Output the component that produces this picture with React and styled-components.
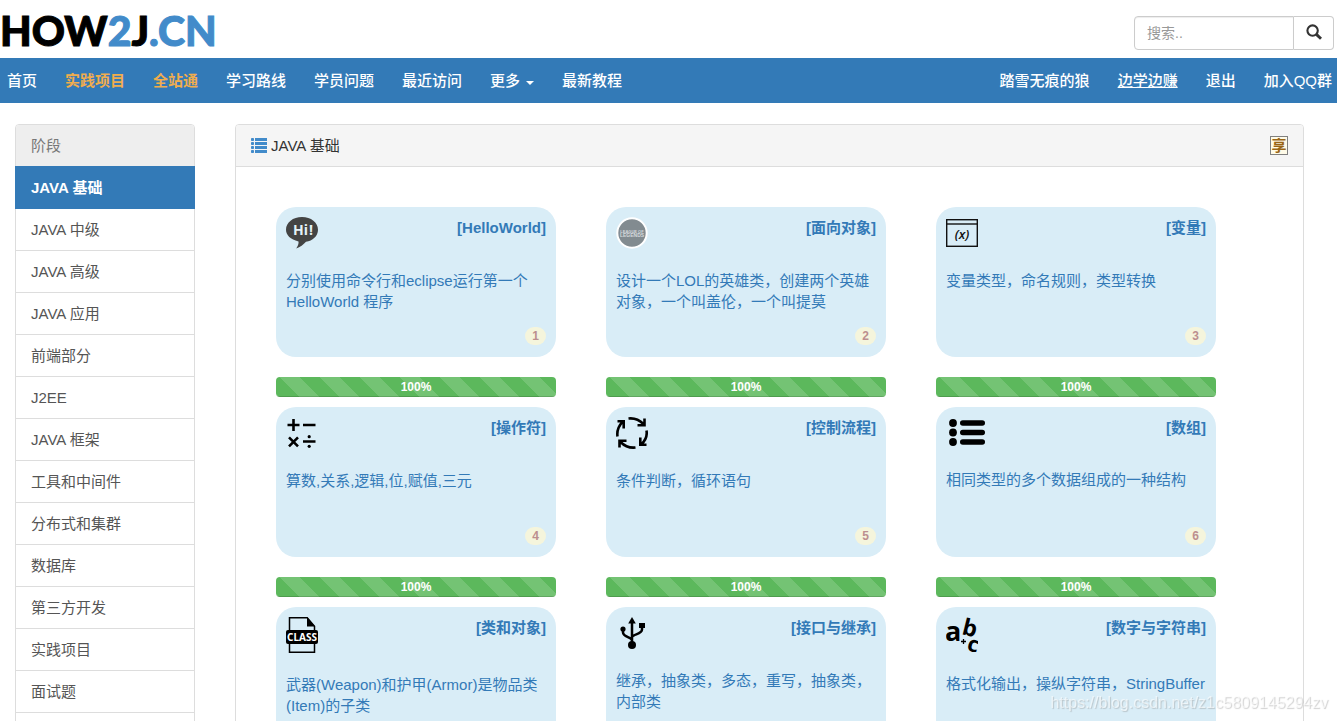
import styled, { createGlobalStyle } from "styled-components";

const GlobalStyle = createGlobalStyle`
  * {
    box-sizing: border-box;
  }

  body {
    margin: 0;
    background-color: #fff;
    color: #333;
    font-family: "Liberation Sans", "Noto Sans CJK SC", sans-serif;
    font-size: 15px;
    line-height: 21px;
  }

  a {
    color: inherit;
    text-decoration: none;
  }

  ul {
    list-style: none;
    margin: 0;
    padding: 0;
  }
`;

const Page = styled.div`
  overflow: hidden;
`;

const Header = styled.header`
  display: flex;
  align-items: center;
  justify-content: space-between;
  height: 58px;
  padding: 8px 3px 0 0;
`;

const LogoLink = styled.a`
  padding-bottom: 4px;
  color: #000;
  font-family: Lato, sans-serif;
  font-size: 41px;
  font-weight: 900;
  line-height: 46px;
  -webkit-text-stroke: 1px currentColor;
`;

const LogoAccent = styled.span`
  color: #428bca;
`;

const SearchForm = styled.form`
  display: flex;
  width: 200px;
  height: 34px;
`;

const SearchInput = styled.input`
  flex: 1;
  min-width: 0;
  padding: 6px 12px;
  border: 1px solid #ccc;
  border-radius: 4px 0 0 4px;
  box-shadow: inset 0 1px 1px rgba(0, 0, 0, 0.075);
  color: #555;
  font-family: inherit;
  font-size: 14px;

  &::placeholder {
    color: #999;
  }
`;

const SearchButton = styled.button`
  display: flex;
  align-items: center;
  justify-content: center;
  width: 40px;
  padding: 0 0 2px;
  border: 1px solid #ccc;
  border-left: 0;
  border-radius: 0 4px 4px 0;
  background-color: #fff;
  color: #333;
`;

const Nav = styled.nav`
  display: flex;
  align-items: center;
  justify-content: space-between;
  height: 45px;
  padding: 0 5px 0 7px;
  background-color: #337ab7;
`;

const NavGroup = styled.div`
  display: flex;
  gap: 28px;
`;

const NavLink = styled.a`
  display: flex;
  align-items: center;
  gap: 6px;
  color: ${({ $highlight }) => ($highlight ? "#f0ad4e" : "#fff")};
  font-weight: ${({ $highlight }) => ($highlight ? 700 : 500)};
  text-decoration: ${({ $underline }) => ($underline ? "underline" : "none")};
  white-space: nowrap;
`;

const Caret = styled.span`
  margin-top: 4px;
  border-top: 4px solid #fff;
  border-right: 4px solid transparent;
  border-left: 4px solid transparent;
`;

const Main = styled.main`
  display: flex;
  gap: 40px;
  padding: 21px 33px 21px 15px;
`;

const Stages = styled.ul`
  flex: 0 0 180px;
  border: 1px solid #ddd;
  border-radius: 4px;
`;

const StageTitle = styled.li`
  padding: 10px 15px;
  border-radius: 3px 3px 0 0;
  background-color: #eee;
  color: #777;
`;

const StageItem = styled.li`
  &:last-child {
    border-bottom: 1px solid #ddd;
  }
`;

const StageLink = styled.a`
  position: relative;
  z-index: ${({ $active }) => ($active ? 1 : 0)};
  display: block;
  margin: 0 -1px;
  padding: 10px 16px;
  border-top: 1px solid ${({ $active }) => ($active ? "#337ab7" : "#ddd")};
  background-color: ${({ $active }) => ($active ? "#337ab7" : "transparent")};
  box-shadow: ${({ $active }) => ($active ? "0 1px 0 #337ab7" : "none")};
  color: ${({ $active }) => ($active ? "#fff" : "#555")};
  font-weight: ${({ $active }) => ($active ? 700 : 400)};
`;

const Panel = styled.section`
  flex: 1;
  min-width: 0;
  border: 1px solid #ddd;
  border-radius: 4px;
`;

const PanelHeading = styled.div`
  display: flex;
  align-items: center;
  justify-content: space-between;
  height: 42px;
  padding: 0 15px;
  border-bottom: 1px solid #ddd;
  border-radius: 3px 3px 0 0;
  background-color: #f5f5f5;
`;

const PanelTitle = styled.h1`
  display: flex;
  align-items: center;
  gap: 4px;
  margin: 0;
  font-size: 15px;
  font-weight: 400;
`;

const ShareButton = styled.button`
  width: 18px;
  height: 19px;
  padding: 0;
  border: 1px solid #808080;
  background-color: #fffbe8;
  color: #996515;
  font-family: inherit;
  font-size: 15px;
  font-weight: 700;
  line-height: 15px;
`;

const Courses = styled.div`
  display: grid;
  grid-template-columns: repeat(auto-fill, 280px);
  gap: 10px 50px;
  padding: 40px;
`;

const Course = styled.article`
  display: flex;
  flex-direction: column;
  gap: 20px;
`;

const CourseCard = styled.a`
  display: flex;
  flex-direction: column;
  height: 150px;
  padding: 10px 10px 12px;
  border-radius: 20px;
  background-color: #d9edf7;
  color: #337ab7;
`;

const CourseTop = styled.div`
  display: flex;
  align-items: flex-start;
  justify-content: space-between;
  margin-bottom: 21px;

  svg {
    display: block;
  }
`;

const CourseNumber = styled.span`
  align-self: flex-end;
  margin-top: auto;
  padding: 3px 7px;
  border-radius: 10px;
  background-color: #f5f5dc;
  color: #bc8f8f;
  font-size: 12px;
  font-weight: 700;
  line-height: 12px;
`;

const Progress = styled.div`
  height: 20px;
  overflow: hidden;
  border-radius: 4px;
  background-color: #f5f5f5;
`;

const ProgressBar = styled.div`
  height: 100%;
  background-color: #5cb85c;
  background-image: linear-gradient(
    45deg,
    rgba(255, 255, 255, 0.15) 25%,
    transparent 25%,
    transparent 50%,
    rgba(255, 255, 255, 0.15) 50%,
    rgba(255, 255, 255, 0.15) 75%,
    transparent 75%,
    transparent
  );
  background-position: 4px 0;
  background-size: 40px 40px;
  box-shadow: inset 0 -1px 0 rgba(0, 0, 0, 0.15);
  color: #fff;
  font-size: 12px;
  font-weight: 700;
  line-height: 20px;
  text-align: center;
`;

const Watermark = styled.div`
  position: fixed;
  right: 9px;
  bottom: 8px;
  color: rgba(255, 255, 255, 0.6);
  font-size: 16px;
  text-shadow: 1px 1px 1px rgba(140, 140, 140, 0.4);
  pointer-events: none;
`;

function SearchIcon() {
  return (
    <svg width="16" height="16" viewBox="0 0 16 16" fill="none" stroke="currentColor">
      <circle cx="6.600" cy="6.600" r="5.200" strokeWidth="2.100" />
      <path d="M10.400 10.400l4.600 4.400" strokeWidth="2.900" />
    </svg>
  );
}

function ListIcon() {
  return (
    <svg width="16" height="15" viewBox="0 0 16 15" fill="#428bca">
      {[0, 4, 8, 12].map((y) => (
        <g key={y}>
          <rect width="3" height="3" rx="0.800" y={y} />
          <rect x="4" y={y} width="12" height="3" />
        </g>
      ))}
    </svg>
  );
}

function HelloIcon() {
  return (
    <svg width="32" height="32" viewBox="0 0 32 32">
      <path
        d="M16 0C7 0 0 5.500 0 12.700c0 5.300 4.500 9.800 12.500 11.700.5 2-.8 4.600-2.300 7.200 4-1.600 7.200-4 9.800-6.900C26.500 24 32 19 32 12.700 32 5.500 25 0 16 0z"
        fill="#444"
      />
      <g fill="#e4f1f7" fontFamily="Open Sans" fontSize="14" fontWeight="700">
        <text x="7" y="18">
          Hi
        </text>
        <text x="23" y="18">
          !
        </text>
      </g>
    </svg>
  );
}

function LegendsIcon() {
  return (
    <svg width="32" height="32" viewBox="0 0 32 32">
      <circle cx="16" cy="16" r="14.700" fill="#828b90" stroke="#fff" strokeWidth="2" />
      <g fill="#d5dadd" fontFamily="Liberation Sans" fontWeight="700" textAnchor="middle">
        <text x="16" y="15.500" fontSize="4">
          LEAGUE OF
        </text>
        <text x="16" y="20" fontSize="5">
          LEGENDS
        </text>
      </g>
    </svg>
  );
}

function VariableIcon() {
  return (
    <svg width="32" height="32" viewBox="0 0 32 32">
      <g fill="none" stroke="#111">
        <rect x="0.700" y="2.700" width="30.600" height="26.600" strokeWidth="1.400" />
        <path d="M0 7h32" strokeWidth="1.400" />
      </g>
      <text
        x="16"
        y="21.500"
        fill="#111"
        fontFamily="Open Sans"
        fontSize="13"
        fontStyle="italic"
        fontWeight="600"
        textAnchor="middle"
      >
        (x)
      </text>
    </svg>
  );
}

function OperatorIcon() {
  return (
    <svg width="32" height="32" viewBox="0 0 32 32" fill="none" stroke="#000" strokeWidth="2.600">
      <path d="M1.500 8h12M7.500 2v12M17 8h12.500M3 20.300l9 9M12 20.300l-9 9M17 24.500h12.500" />
      <circle cx="23.200" cy="19.700" r="1.600" fill="#000" stroke="none" />
      <circle cx="23.200" cy="29.300" r="1.600" fill="#000" stroke="none" />
    </svg>
  );
}

function LoopIcon() {
  return (
    <svg width="32" height="32" viewBox="0 0 32 32" fill="none" stroke="#000" strokeWidth="2.600">
      <path d="M1.500 19.500C.8 14.500 2.500 9 6.500 4.800M1.500 4.300h6.200v7.200" />
      <path d="M12.500 1.500C18.500.8 23.500 3 27.500 7M28.500 1.500v6.700h-7" />
      <path d="M30.500 13.500c.8 5-1 10-5 13.500M30.500 27.700h-6.200v-7.200" />
      <path d="M19.500 30.500C13.500 31.200 8.500 29 4.500 25M3.500 30.500v-6.700h7" />
    </svg>
  );
}

function ArrayIcon() {
  return (
    <svg width="40" height="31" viewBox="0 0 40 31">
      {[6, 15.5, 25].map((y) => (
        <g key={y}>
          <circle cx="7" cy={y} r="3.900" />
          <rect x="14" y={y - 2.8} width="25" height="5.600" rx="2.800" />
        </g>
      ))}
    </svg>
  );
}

function ClassIcon() {
  return (
    <svg width="32" height="36" viewBox="0 0 32 36">
      <path d="M3.500 35.200V.8h17.700l7.300 8.400v26z" fill="none" stroke="#000" strokeWidth="1.500" />
      <path d="M21 0v9.500h8z" />
      <rect y="13" width="32" height="14" rx="2" />
      <text
        x="16"
        y="23.500"
        fill="#fff"
        fontFamily="Noto Sans"
        fontSize="10"
        fontWeight="700"
        textAnchor="middle"
      >
        CLASS
      </text>
    </svg>
  );
}

function UsbIcon() {
  return (
    <svg width="32" height="32" viewBox="0 0 32 32">
      <path
        d="M16 5v23M16 23.500c0-3.500-9-3.500-9-8v-4M16 20.500c0-3.500 10-3 10-8V9"
        fill="none"
        stroke="#000"
        strokeWidth="2.500"
      />
      <path d="M16 0l-3.800 6.500h7.600z" />
      <circle cx="7" cy="12" r="2.600" />
      <rect x="23" y="6" width="6" height="5" />
      <circle cx="16" cy="28" r="4" />
    </svg>
  );
}

function StringIcon() {
  return (
    <svg width="32" height="35" viewBox="0 0 32 35" fontFamily="Open Sans" fontWeight="700">
      <text x="-1" y="24" fontSize="27">
        a
      </text>
      <text x="15" y="17" fontSize="23" transform="rotate(14 15 17)">
        b
      </text>
      <text x="20" y="33" fontSize="22" transform="rotate(16 20 33)">
        c
      </text>
      <path d="M15 24.500h5M17.500 22v5" stroke="#000" strokeWidth="1.300" />
    </svg>
  );
}

const leftLinks = [
  { text: "首页" },
  { text: "实践项目", highlight: true },
  { text: "全站通", highlight: true },
  { text: "学习路线" },
  { text: "学员问题" },
  { text: "最近访问" },
  { text: "更多", caret: true },
  { text: "最新教程" },
];

const rightLinks = [
  { text: "踏雪无痕的狼" },
  { text: "边学边赚", underline: true },
  { text: "退出" },
  { text: "加入QQ群" },
];

const stages = [
  "JAVA 基础",
  "JAVA 中级",
  "JAVA 高级",
  "JAVA 应用",
  "前端部分",
  "J2EE",
  "JAVA 框架",
  "工具和中间件",
  "分布式和集群",
  "数据库",
  "第三方开发",
  "实践项目",
  "面试题",
];

const courses = [
  { Icon: HelloIcon, title: "HelloWorld", text: "分别使用命令行和eclipse运行第一个HelloWorld 程序" },
  { Icon: LegendsIcon, title: "面向对象", text: "设计一个LOL的英雄类，创建两个英雄对象，一个叫盖伦，一个叫提莫" },
  { Icon: VariableIcon, title: "变量", text: "变量类型，命名规则，类型转换" },
  { Icon: OperatorIcon, title: "操作符", text: "算数,关系,逻辑,位,赋值,三元" },
  { Icon: LoopIcon, title: "控制流程", text: "条件判断，循环语句" },
  { Icon: ArrayIcon, title: "数组", text: "相同类型的多个数据组成的一种结构" },
  { Icon: ClassIcon, title: "类和对象", text: "武器(Weapon)和护甲(Armor)是物品类(Item)的子类" },
  { Icon: UsbIcon, title: "接口与继承", text: "继承，抽象类，多态，重写，抽象类，内部类" },
  { Icon: StringIcon, title: "数字与字符串", text: "格式化输出，操纵字符串，StringBuffer" },
];

function NavLinks({ links }) {
  return (
    <NavGroup>
      {links.map(({ text, highlight, underline, caret }) => (
        <NavLink key={text} href="#" $highlight={highlight} $underline={underline}>
          {text}
          {caret && <Caret />}
        </NavLink>
      ))}
    </NavGroup>
  );
}

function App() {
  return (
    <Page>
      <GlobalStyle />
      <Header>
        <LogoLink href="#">
          HOW<LogoAccent>2</LogoAccent>J<LogoAccent>.CN</LogoAccent>
        </LogoLink>
        <SearchForm onSubmit={(e) => e.preventDefault()}>
          <SearchInput type="text" placeholder="搜索.." aria-label="搜索" />
          <SearchButton type="submit" aria-label="搜索">
            <SearchIcon />
          </SearchButton>
        </SearchForm>
      </Header>
      <Nav>
        <NavLinks links={leftLinks} />
        <NavLinks links={rightLinks} />
      </Nav>
      <Main>
        <Stages>
          <StageTitle>阶段</StageTitle>
          {stages.map((stage, index) => (
            <StageItem key={stage}>
              <StageLink href="#" $active={index === 0}>
                {stage}
              </StageLink>
            </StageItem>
          ))}
        </Stages>
        <Panel>
          <PanelHeading>
            <PanelTitle>
              <ListIcon />
              JAVA 基础
            </PanelTitle>
            <ShareButton type="button">享</ShareButton>
          </PanelHeading>
          <Courses>
            {courses.map(({ Icon, title, text }, index) => (
              <Course key={title}>
                <CourseCard href="#">
                  <CourseTop>
                    <Icon />
                    <strong>[{title}]</strong>
                  </CourseTop>
                  <span>{text}</span>
                  <CourseNumber>{index + 1}</CourseNumber>
                </CourseCard>
                <Progress>
                  <ProgressBar style={{ width: "100%" }}>100%</ProgressBar>
                </Progress>
              </Course>
            ))}
          </Courses>
        </Panel>
      </Main>
      <Watermark>https://blog.csdn.net/z1c5809145294zv</Watermark>
    </Page>
  );
}

export default App;
